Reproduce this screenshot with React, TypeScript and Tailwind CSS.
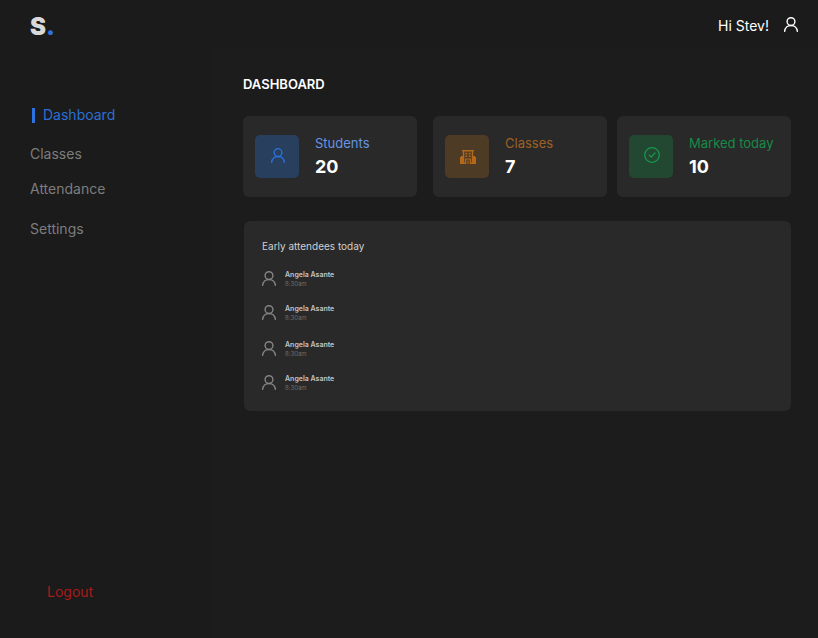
import type { ReactNode } from "react";

function UserIcon({ className }: { className: string }) {
  return (
    <svg viewBox="0 0 14 15" fill="none" stroke="currentColor" strokeLinecap="round" className={className} aria-hidden="true">
      <circle cx="7" cy="4.6" r="3.9" />
      <path d="M0.7 14.3 C0.9 10.8 3.6 8.5 7 8.5 C10.4 8.5 13.1 10.8 13.3 14.3" />
    </svg>
  );
}

function BuildingIcon() {
  return (
    <svg viewBox="0 0 16 14" className="h-[14px] w-4" fill="currentColor" aria-hidden="true">
      <path
        fillRule="evenodd"
        d="M2 0H14V1.2H13.2V6H15V7H16V14H9.8V9.4H6.2V14H0V7H1V6H2.8V1.2H2Z M4.2 1.4V12.6H5V8.4H11V12.6H11.8V1.4Z"
      />
      <path d="M5.4 2.8h1.7v1.4H5.4zM8.9 2.8h1.7v1.4H8.9zM5.4 5.6h1.7V7H5.4zM8.9 5.6h1.7V7H8.9zM7.5 10.6h1V14h-1z" />
      <path d="M4.2 4.7h7.6v.4H4.2zM7.8 1.4h.4v6.4h-.4z" opacity="0.5" />
    </svg>
  );
}

function CheckIcon() {
  return (
    <svg viewBox="0 0 16 16" className="size-4" fill="none" stroke="currentColor" strokeWidth="1.2" strokeLinecap="round" strokeLinejoin="round" aria-hidden="true">
      <circle cx="8" cy="8" r="7.3" />
      <path d="M5.2 8.2 7.2 10.2 11 5.8" />
    </svg>
  );
}

type StatProps = {
  label: string;
  value: number;
  tile: string;
  labelColor: string;
  spacing?: string;
  children: ReactNode;
};

function StatCard({ label, value, tile, labelColor, spacing = "", children }: StatProps) {
  return (
    <section className={`flex min-w-0 flex-1 items-start rounded-md bg-[#292929] px-3 pt-[19px] pb-[18px] ${spacing}`}>
      <div className={`flex h-[43px] w-11 shrink-0 items-center justify-center rounded-[5px] pl-[2px] ${tile}`}>{children}</div>
      <div className="ml-4 whitespace-nowrap">
        <h2 className={`text-[13px] leading-4 ${labelColor}`}>{label}</h2>
        <p className="mt-1 text-lg leading-6 font-bold text-white">{value}</p>
      </div>
    </section>
  );
}

const attendees = [
  { id: 1, name: "Angela Asante", time: "8:30am" },
  { id: 2, name: "Angela Asante", time: "8:30am" },
  { id: 3, name: "Angela Asante", time: "8:30am" },
  { id: 4, name: "Angela Asante", time: "8:30am" },
];

export default function App() {
  return (
    <div className="flex min-h-screen flex-col bg-[#1b1b1b] font-['Inter',sans-serif] text-white">
      <header className="flex h-12 shrink-0 items-center justify-between pt-1 pr-5 pl-[30px]">
        <a href="#" className="pt-[2px] text-2xl leading-8 font-black text-[#d9d9d9]">
          S<span className="text-[#2b73e0]">.</span>
        </a>
        <button type="button" className="flex items-center gap-[15px] text-sm leading-5">
          Hi Stev!
          <UserIcon className="mb-1 h-[15px] w-[14px] stroke-[1.4]" />
        </button>
      </header>

      <div className="flex flex-1">
        <aside className="flex w-[214px] shrink-0 flex-col pt-[57px] pb-9 pl-[30px] text-sm leading-5 text-[#7d7d7d]">
          <nav className="flex flex-col items-start">
            <a href="#dashboard" aria-current="page" className="ml-[2px] flex items-center gap-2 text-[#2b6fd6]">
              <span className="h-[15px] w-[3px] bg-[#2b73e0]" />
              Dashboard
            </a>
            <a href="#classes" className="mt-[19px]">Classes</a>
            <a href="#attendance" className="mt-[15px]">Attendance</a>
            <a href="#settings" className="mt-5">Settings</a>
          </nav>
          <button type="button" className="mt-auto ml-[17px] self-start text-[#a61b1b]">Logout</button>
        </aside>

        <main className="min-w-0 flex-1 bg-[#1c1c1c] pt-[26px] pr-[27px] pl-[29px]">
          <h1 className="text-[13px] leading-5 font-semibold">DASHBOARD</h1>

          <div className="mt-[22px] flex">
            <StatCard label="Students" value={20} tile="bg-[#293f5e] text-[#2b73e0]" labelColor="text-[#6496e4]" spacing="mr-4">
              <UserIcon className="mb-[3px] h-[15px] w-[14px] stroke-[1.3]" />
            </StatCard>
            <StatCard label="Classes" value={7} tile="bg-[#4e3b26] text-[#b4691a]" labelColor="text-[#9e6124]" spacing="mr-[10px]">
              <BuildingIcon />
            </StatCard>
            <StatCard label="Marked today" value={10} tile="bg-[#234832] text-[#169b4d]" labelColor="text-[#168b48]">
              <span className="mb-[3px]"><CheckIcon /></span>
            </StatCard>
          </div>

          <section className="mt-6 ml-px rounded-md bg-[#292929] px-[18px] pt-[17px] pb-5">
            <h2 className="text-[10px] leading-4 text-[#cfcfcf]">Early attendees today</h2>
            <ul className="mt-4 flex flex-col">
              {attendees.map((person) => (
                <li key={person.id} className="mb-[17px] flex items-center gap-[9px] last:mb-0 nth-2:mb-[19px]">
                  <UserIcon className="h-[17px] w-[14px] stroke-[1.4] text-[#858585]" />
                  <div className="-my-1">
                    <p className="text-[7px] leading-[9px] font-semibold text-[#c4c4c4]">{person.name}</p>
                    <p className="text-[6px] leading-[9px] text-[#6f6f6f]">{person.time}</p>
                  </div>
                </li>
              ))}
            </ul>
          </section>
        </main>
      </div>
    </div>
  );
}
